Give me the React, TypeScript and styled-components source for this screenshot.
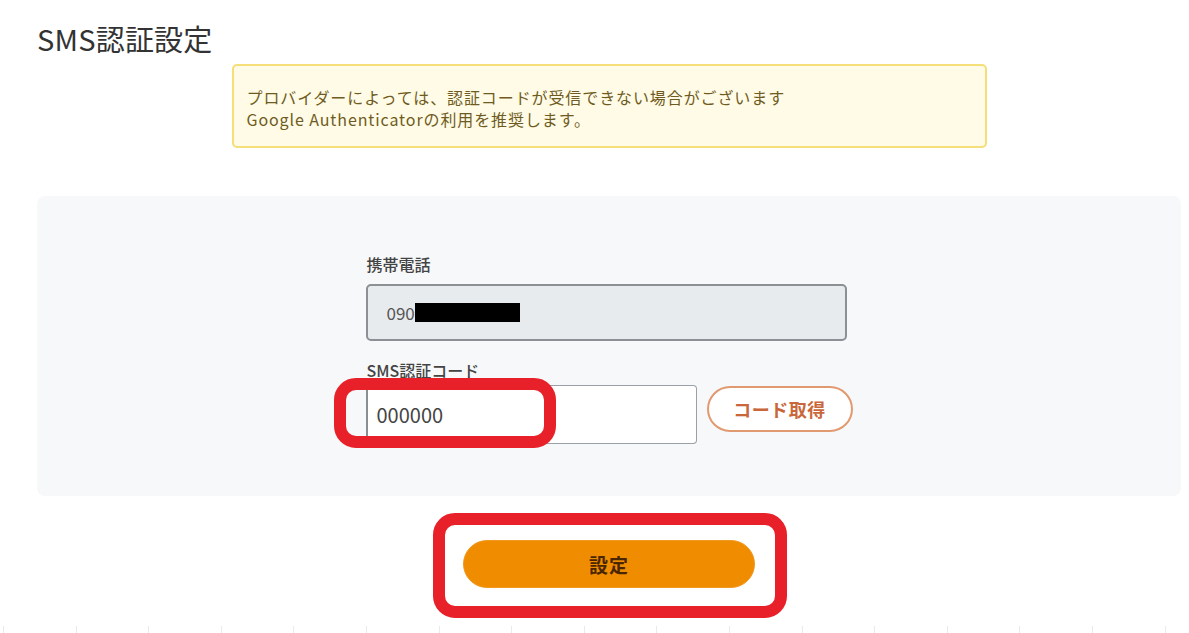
import React from "react";
import styled, { createGlobalStyle } from "styled-components";

const GlobalStyle = createGlobalStyle`
  html, body {
    margin: 0;
    padding: 0;
    background: #ffffff;
  }
  body {
    font-family: "Noto Sans CJK JP", "Noto Sans", sans-serif;
    color: #333;
  }
  * { box-sizing: border-box; }
`;

const Page = styled.div`
  width: 1189px;
  height: 633px;
  padding: 0 8px 0 37px;
  display: flex;
  flex-direction: column;
  align-items: center;
  overflow: hidden;
`;

const Title = styled.h1`
  align-self: flex-start;
  margin: 18px 0 0 0;
  font-size: 29px;
  line-height: 40px;
  font-weight: 400;
  color: #333;
  letter-spacing: 0.2px;
`;

const Notice = styled.div`
  margin-top: 6px;
  width: 755px;
  height: 84px;
  padding: 20px 13px 16px;
  background: #fffbe6;
  border: 2px solid #f4df78;
  border-radius: 5px;
  color: #6f5b22;
  font-size: 16px;
  line-height: 22px;
  letter-spacing: 0.9px;
`;

const Panel = styled.section`
  margin-top: 48px;
  width: 100%;
  height: 300px;
  background: #f7f8fa;
  border-radius: 8px;
  padding-top: 56px;
  display: flex;
  justify-content: center;
`;

const FormColumn = styled.div`
  width: 487px;
  display: flex;
  flex-direction: column;
`;

const Label = styled.label<{ $gap: number }>`
  padding-left: 1px;
  font-size: 16px;
  line-height: 24px;
  font-weight: 500;
  color: #444;
  margin-bottom: ${(p) => p.$gap}px;
`;

const PhoneField = styled.div`
  width: 481px;
  height: 57px;
  background: #e8ebee;
  border: 2px solid #8c9094;
  border-radius: 5px;
  display: flex;
  align-items: center;
  padding-left: 19px;
  font-size: 17px;
  color: #555;
  margin-bottom: 17px;
`;

const Redaction = styled.span`
  display: inline-block;
  width: 105px;
  height: 19px;
  background: #000;
`;

const CodeRow = styled.div`
  display: flex;
  align-items: flex-start;
  gap: 10px;
`;

const CodeInputWrap = styled.div`
  position: relative;
  width: 331px;
  height: 59px;
  margin-top: 1px;
`;

const CodeInput = styled.div`
  width: 100%;
  height: 100%;
  background: #fff;
  border: 1px solid #9aa0a6;
  border-left: 2px solid #8a8f94;
  border-radius: 4px;
  display: flex;
  align-items: center;
  padding-left: 9px;
  font-size: 20px;
  color: #444;
`;

const Annotation = styled.div<{ $l: number; $t: number; $w: number; $h: number }>`
  position: absolute;
  left: ${(p) => p.$l}px;
  top: ${(p) => p.$t}px;
  width: ${(p) => p.$w}px;
  height: ${(p) => p.$h}px;
  border: 12px solid #e8202a;
  border-radius: 22px;
  pointer-events: none;
`;

const OutlineButton = styled.button`
  margin-top: 2px;
  width: 146px;
  height: 46px;
  border: 2px solid #e19a70;
  border-radius: 23px;
  background: #fff;
  color: #c9673a;
  font-family: inherit;
  font-size: 18px;
  font-weight: 700;
  letter-spacing: 0.5px;
`;

const SubmitWrap = styled.div`
  position: relative;
  margin-top: 44px;
`;

const PrimaryButton = styled.button`
  display: block;
  width: 292px;
  height: 48px;
  border: 1px solid #f29a20;
  border-radius: 24px;
  background: #f08c00;
  color: #4a2600;
  font-family: inherit;
  font-size: 19px;
  font-weight: 700;
  letter-spacing: 1px;
`;

const Ticks = styled.div`
  margin-top: 38px;
  width: 1189px;
  margin-left: -29px;
  height: 7px;
  background: repeating-linear-gradient(
    to right,
    transparent 0 3px,
    #eaeaea 3px 4px,
    transparent 4px 72.6px
  );
`;

export default function App() {
  return (
    <>
      <GlobalStyle />
      <Page>
        <Title>SMS認証設定</Title>
        <Notice>
          プロバイダーによっては、認証コードが受信できない場合がございます
          <br />
          Google Authenticatorの利用を推奨します。
        </Notice>
        <Panel>
          <FormColumn>
            <Label $gap={8}>携帯電話</Label>
            <PhoneField>
              090
              <Redaction />
            </PhoneField>
            <Label $gap={2}>SMS認証コード</Label>
            <CodeRow>
              <CodeInputWrap>
                <CodeInput>000000</CodeInput>
                <Annotation $l={-32} $t={-7} $w={222} $h={70} />
              </CodeInputWrap>
              <OutlineButton>コード取得</OutlineButton>
            </CodeRow>
          </FormColumn>
        </Panel>
        <SubmitWrap>
          <PrimaryButton>設定</PrimaryButton>
          <Annotation $l={-30} $t={-27} $w={354} $h={105} />
        </SubmitWrap>
        <Ticks />
      </Page>
    </>
  );
}
